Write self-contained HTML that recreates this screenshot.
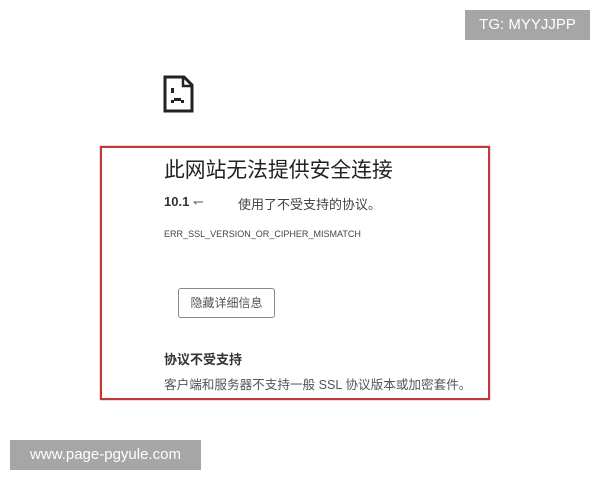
<!DOCTYPE html>
<html><head><meta charset="utf-8"><style>
body{margin:0;width:600px;height:480px;background:#fff;position:relative;overflow:hidden;font-family:"Liberation Sans","Noto Sans CJK SC",sans-serif;color:#333}
.a{position:absolute;white-space:nowrap}
.box{position:absolute;left:100px;top:146px;width:386px;height:250px;border:2px solid #c0393b;box-shadow:0 0 1px #c0393b}
.wm{position:absolute;background:#a6a6a6;color:#fff;font-size:15px;text-align:center}
</style></head><body>
<svg class="a" style="left:163px;top:75px" width="31" height="38" viewBox="0 0 31 38">
<path d="M2 2H21L29 10V36H2Z" fill="none" stroke="#222" stroke-width="3"/>
<path d="M20 2V11H29" fill="none" stroke="#222" stroke-width="2.5"/>
<rect x="8" y="13" width="3" height="5" fill="#222"/>
<rect x="8" y="25" width="3" height="3" fill="#222"/>
<rect x="11" y="23" width="7" height="3" fill="#222"/>
<rect x="18" y="25" width="3" height="3" fill="#222"/>
</svg>
<div class="box"></div>
<div class="a" style="left:164px;top:153px;font-size:20.8px;color:#222">此网站无法提供安全连接</div>
<div class="a" style="left:164px;top:194px;font-size:13px;font-weight:bold;color:#333">10.1 <span style="font-weight:normal;color:#555">↽</span></div>
<div class="a" style="left:238px;top:194px;font-size:13px;color:#444">使用了不受支持的协议。</div>
<div class="a" style="left:164px;top:229px;font-size:9.5px;color:#444;transform:scaleX(0.95);transform-origin:left">ERR_SSL_VERSION_OR_CIPHER_MISMATCH</div>
<div class="a" style="left:178px;top:288px;width:95px;height:28px;border:1px solid #888;border-radius:3px;font-size:12px;color:#555;text-align:center;line-height:28px">隐藏详细信息</div>
<div class="a" style="left:164px;top:349px;font-size:13px;font-weight:bold;color:#333">协议不受支持</div>
<div class="a" style="left:164px;top:374px;font-size:12.6px;color:#555">客户端和服务器不支持一般 SSL 协议版本或加密套件。</div>
<div class="wm" style="left:465px;top:10px;width:125px;height:30px;line-height:30px">TG: MYYJJPP</div>
<div class="wm" style="left:10px;top:440px;width:191px;height:30px;line-height:30px">www.page-pgyule.com</div>
</body></html>
